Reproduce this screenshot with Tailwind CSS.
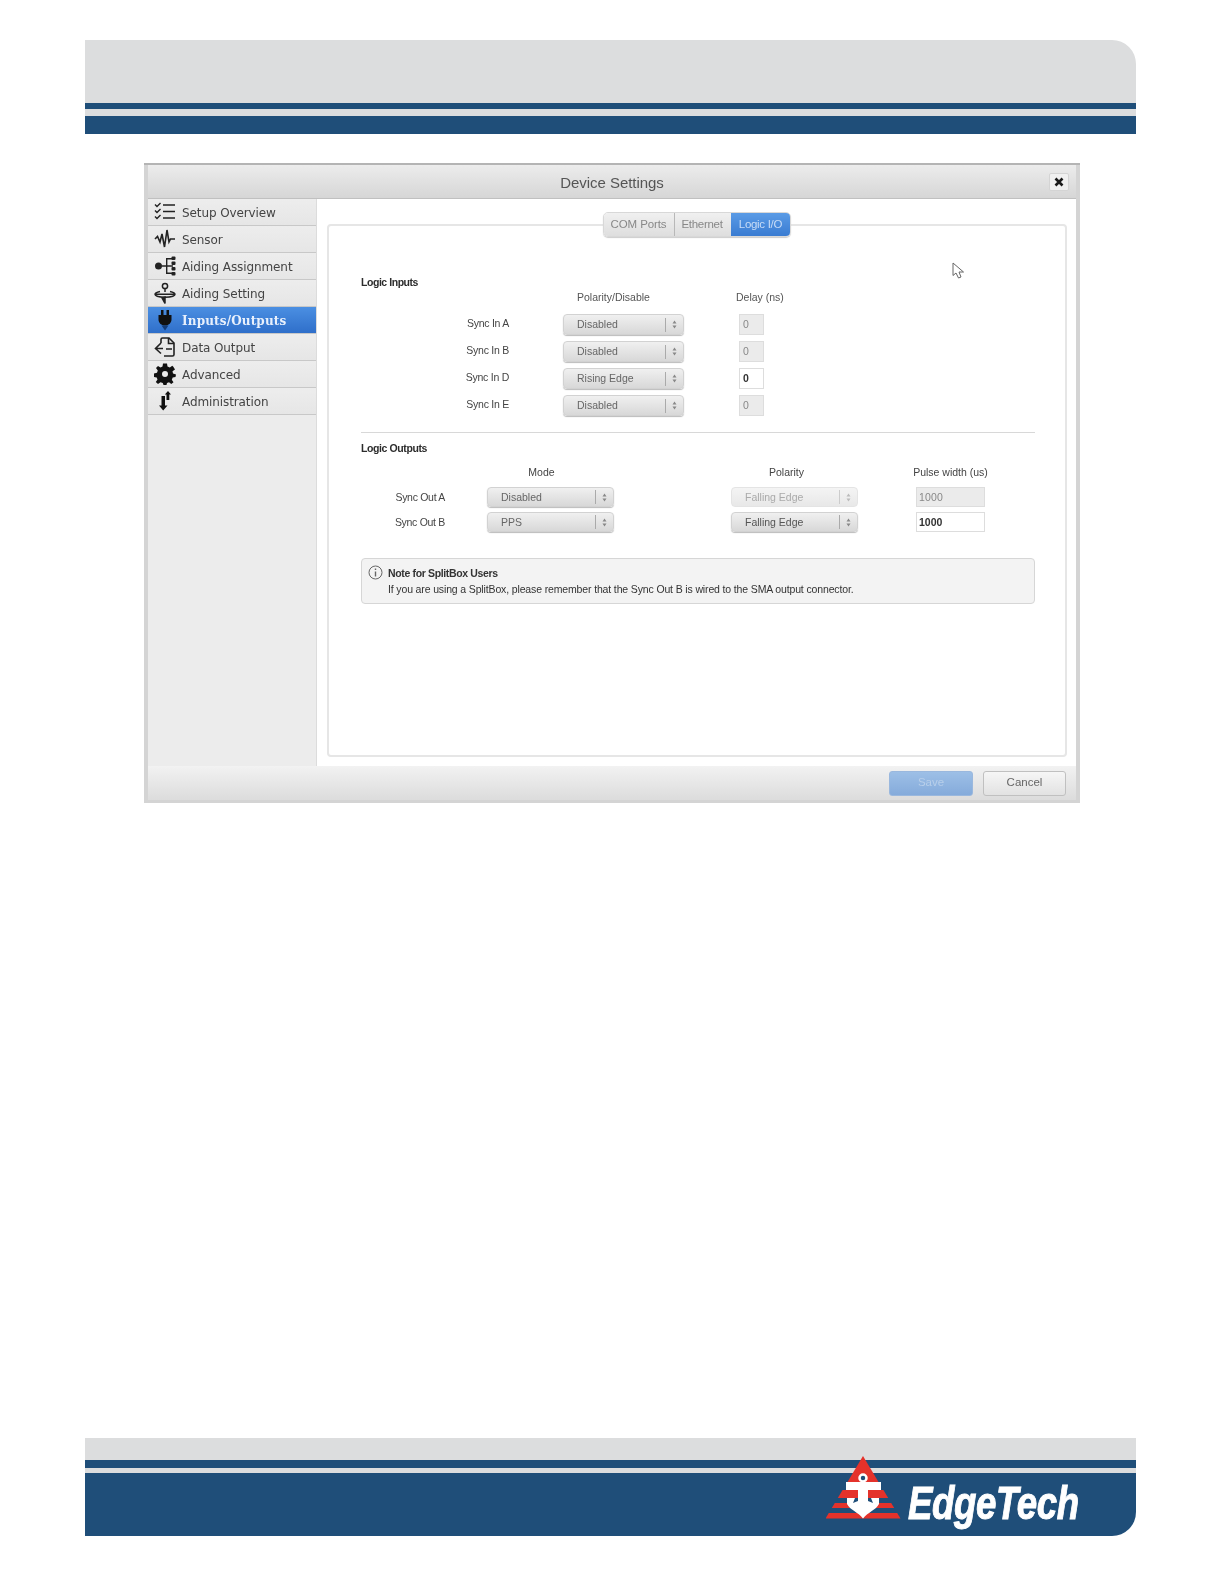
<!DOCTYPE html>
<html>
<head>
<meta charset="utf-8">
<script src="https://cdn.jsdelivr.net/npm/@tailwindcss/browser@4"></script>
<title>Device Settings</title>
</head>
<body class="bg-white w-[1224px] h-[1584px] overflow-hidden relative font-['Liberation_Sans',Arial,sans-serif]">

<header class="pt-[40px] pl-[85px] pr-[88px]">
  <div class="h-[63px] bg-[#dcddde] rounded-tr-[24px]"></div>
  <div class="h-[6px] bg-[#1f4e79]"></div>
  <div class="h-[7px] bg-[#dcddde]"></div>
  <div class="h-[18px] bg-[#1f4e79]"></div>
</header>

<main class="mt-[29px] ml-[144px] w-[936px] h-[640px] bg-[#d4d4d4] border-t-[2px] border-[#b4b4b4] px-[4px] flex flex-col blur-[0.5px] relative">
  <div class="h-[34px] shrink-0 bg-gradient-to-b from-[#ececec] to-[#d6d6d6] border-b border-[#c0c0c0] flex items-center justify-center relative">
    <span class="text-[15px] text-[#555] pt-[3px] tracking-[-0.05px]">Device Settings</span>
    <button class="absolute right-[7px] top-[8px] w-[20px] h-[18px] bg-[#f0f0f0] border border-[#d4d4d4] rounded-[2px] flex items-center justify-center">
      <svg width="10" height="10" viewBox="0 0 10 10"><path d="M1.500 1.500 8.500 8.500M8.500 1.500 1.500 8.500" stroke="#1a1a1a" stroke-width="2.600"/></svg>
    </button>
  </div>

  <div class="flex h-[567px] shrink-0">
    <nav class="w-[169px] shrink-0 bg-[#ececec] border-r border-[#dcdcdc] font-['DejaVu_Sans',Verdana,sans-serif] text-[12px] text-[#444]">
      <a class="h-[27px] flex items-center border-b border-[#c8c8c8] bg-gradient-to-b from-[#ededed] to-[#e6e6e6]">
        <svg class="ml-[6px] w-[22px] h-[22px] shrink-0" viewBox="0 0 22 22" fill="none" stroke="#222"><path d="M1 3.500 3 5.500 6.500 2M1 9.500 3 11.500 6.500 8M1 15.500 3 17.500 6.500 14" stroke-width="1.400"/><path d="M9 4H21M9 10.500H21M9 17H21" stroke-width="1.500"/></svg>
        <span class="ml-[6px] tracking-[-0.1px] pt-[1px]">Setup Overview</span>
      </a>
      <a class="h-[27px] flex items-center border-b border-[#c8c8c8] bg-gradient-to-b from-[#ededed] to-[#e6e6e6]">
        <svg class="ml-[6px] w-[22px] h-[22px] shrink-0" viewBox="0 0 22 22" fill="none" stroke="#222" stroke-width="1.600"><path d="M1 11 3.500 8.500 6 14 8 6 10.500 19 13 2 15 14 16.500 11H21"/></svg>
        <span class="ml-[6px] tracking-[-0.1px] pt-[1px]">Sensor</span>
      </a>
      <a class="h-[27px] flex items-center border-b border-[#c8c8c8] bg-gradient-to-b from-[#ededed] to-[#e6e6e6]">
        <svg class="ml-[6px] w-[22px] h-[22px] shrink-0" viewBox="0 0 22 22" fill="#222" stroke="none"><circle cx="4.500" cy="11" r="3.500"/><path d="M8 10.300h4V3h7v1.400h-5.600v5.900H19v1.400h-5.600v5.900H19V19h-7v-7.300H8z"/><rect x="17.500" y="1.500" width="4" height="3.600" rx="1"/><rect x="17.500" y="6.500" width="4" height="3.400" rx="1"/><rect x="17.500" y="12" width="4" height="3.400" rx="1"/><rect x="17.500" y="17" width="4" height="3.600" rx="1"/></svg>
        <span class="ml-[6px] tracking-[-0.1px] pt-[1px]">Aiding Assignment</span>
      </a>
      <a class="h-[27px] flex items-center border-b border-[#c8c8c8] bg-gradient-to-b from-[#ededed] to-[#e6e6e6]">
        <svg class="ml-[6px] w-[22px] h-[22px] shrink-0" viewBox="0 0 22 22" fill="none" stroke="#222" stroke-width="1.500"><circle cx="11" cy="4" r="2.600"/><path d="M11 6.600V10M6 9.500C2.500 10.200 1 11.200 1 12.300 1 14 5.500 15.200 11 15.200S21 14 21 12.300C21 11.200 19.500 10.200 16 9.500M1 12.300H21"/><path d="M8 16 11 21.500 11 15Z" fill="#222"/></svg>
        <span class="ml-[6px] tracking-[-0.1px] pt-[1px]">Aiding Setting</span>
      </a>
      <a class="h-[27px] flex items-center border-b border-[#c8c8c8] bg-gradient-to-b from-[#4b8fe2] to-[#2f6fca] font-['DejaVu_Serif',serif] font-bold">
        <svg class="ml-[6px] w-[22px] h-[22px] shrink-0" viewBox="0 0 22 22"><path d="M7 1h2.500v5H12.500V1H15v5h2.500v4.500C17.500 14 14.500 16 12.500 16.500H9.500C7.500 16 4.500 14 4.500 10.500V6H7z" fill="#111"/><path d="M7.500 16.500H14.500L11 21.500Z" fill="#143c78"/></svg>
        <span class="ml-[6px] tracking-[0.15px] text-[#e8f0fc] pt-[1px]">Inputs/Outputs</span>
      </a>
      <a class="h-[27px] flex items-center border-b border-[#c8c8c8] bg-gradient-to-b from-[#ededed] to-[#e6e6e6]">
        <svg class="ml-[6px] w-[22px] h-[22px] shrink-0" viewBox="0 0 22 22" fill="none" stroke="#222" stroke-width="1.600"><path d="M7 7V3.500C7 2.500 7.500 2 8.500 2H15L20 7V18.500C20 19.500 19.500 20 18.500 20H10"/><path d="M7 7 1.500 12.500 7 17.500M2 12.500H9M12 13H18"/><path d="M14.500 2V7.500H20"/></svg>
        <span class="ml-[6px] tracking-[-0.1px] pt-[1px]">Data Output</span>
      </a>
      <a class="h-[27px] flex items-center border-b border-[#c8c8c8] bg-gradient-to-b from-[#ededed] to-[#e6e6e6]">
        <svg class="ml-[6px] w-[22px] h-[22px] shrink-0" viewBox="0 0 22 22"><path fill="#111" fill-rule="evenodd" d="M9 0.500H13L13.500 3.500 15.800 4.500 18.300 2.700 19.300 3.700 21 6.500 18.500 8.200 19 10.500 22 11.500 21.500 14 18.700 14.500 17.800 16.800 19.500 19.300 17.300 21 15 19.300 13 20 12.500 22H9.500L8.800 20 6.500 19.200 4 21 1.800 19 3.500 16.500 2.700 14.500 0 14V10.500L3 9.800 3.800 7.500 2 5 4 3 6.500 4.500 8.500 3.500ZM11 8A3 3 0 1 0 11 14 3 3 0 1 0 11 8Z"/></svg>
        <span class="ml-[6px] tracking-[-0.1px] pt-[1px]">Advanced</span>
      </a>
      <a class="h-[27px] flex items-center border-b border-[#c8c8c8] bg-gradient-to-b from-[#ededed] to-[#e6e6e6]">
        <svg class="ml-[6px] w-[22px] h-[22px] shrink-0" viewBox="0 0 22 22" fill="#111"><path d="M7.500 6H11V15.500H13.500L9.200 20.500 5 15.500H7.500Z"/><path d="M12.500 10V4.500H10.800L14 1 17 4.500H15.300V10Z"/></svg>
        <span class="ml-[6px] tracking-[-0.1px] pt-[1px]">Administration</span>
      </a>
    </nav>

    <section class="flex-1 bg-white pt-[25px] pl-[10px] pr-[9px] pb-[9px] relative">
      <div class="h-[533px] border-2 border-[#e6e6e6] rounded-[4px] pl-[32px] pr-[30px] text-[#333] text-[10.5px]">
        <h2 class="mt-[49px] h-[14px] leading-[14px] text-[10.5px] font-bold text-[#2c2c2c] tracking-[-0.45px]">Logic Inputs</h2>

        <div class="mt-[1px] grid grid-cols-[148px_121px_26px] gap-x-[54px] h-[14px] leading-[14px] text-[#555]">
          <span></span><span class="pl-[14px] whitespace-nowrap">Polarity/Disable</span><span class="whitespace-nowrap -ml-[2px]">Delay (ns)</span>
        </div>

        <div class="mt-[10px] grid grid-cols-[148px_121px_26px] gap-x-[54px] gap-y-[6px] auto-rows-[21px] items-center">
          <span class="text-right pb-[2px] tracking-[-0.25px] text-[#444]">Sync In A</span>
          <div class="h-[21px] flex items-center rounded-[4px] border border-[#d2d2d2] bg-gradient-to-b from-[#f0f0f0] to-[#d8d8d8] text-[#666] shadow-[0_1px_1px_#bbb]"><span class="pl-[13px] pt-[1px] flex-1">Disabled</span><i class="w-px h-[14px] bg-[#aaa]"></i><svg class="w-[17px] h-[11px]" viewBox="0 0 17 11"><path d="M6.500 4.500 8.500 1.500 10.500 4.500ZM6.500 6.500 8.500 9.500 10.500 6.500Z" fill="#888"/></svg></div>
          <div class="ml-[1px] h-[21px] bg-[#ebebeb] border border-[#ddd] text-[#888] pl-[3px] leading-[19px]">0</div>

          <span class="text-right pb-[2px] tracking-[-0.25px] text-[#444]">Sync In B</span>
          <div class="h-[21px] flex items-center rounded-[4px] border border-[#d2d2d2] bg-gradient-to-b from-[#f0f0f0] to-[#d8d8d8] text-[#666] shadow-[0_1px_1px_#bbb]"><span class="pl-[13px] pt-[1px] flex-1">Disabled</span><i class="w-px h-[14px] bg-[#aaa]"></i><svg class="w-[17px] h-[11px]" viewBox="0 0 17 11"><path d="M6.500 4.500 8.500 1.500 10.500 4.500ZM6.500 6.500 8.500 9.500 10.500 6.500Z" fill="#888"/></svg></div>
          <div class="ml-[1px] h-[21px] bg-[#ebebeb] border border-[#ddd] text-[#888] pl-[3px] leading-[19px]">0</div>

          <span class="text-right pb-[2px] tracking-[-0.25px] text-[#444]">Sync In D</span>
          <div class="h-[21px] flex items-center rounded-[4px] border border-[#d2d2d2] bg-gradient-to-b from-[#f0f0f0] to-[#d8d8d8] text-[#666] shadow-[0_1px_1px_#bbb]"><span class="pl-[13px] pt-[1px] flex-1">Rising Edge</span><i class="w-px h-[14px] bg-[#aaa]"></i><svg class="w-[17px] h-[11px]" viewBox="0 0 17 11"><path d="M6.500 4.500 8.500 1.500 10.500 4.500ZM6.500 6.500 8.500 9.500 10.500 6.500Z" fill="#888"/></svg></div>
          <div class="ml-[1px] h-[21px] bg-white border border-[#ddd] text-[#333] pl-[3px] leading-[19px] font-bold">0</div>

          <span class="text-right pb-[2px] tracking-[-0.25px] text-[#444]">Sync In E</span>
          <div class="h-[21px] flex items-center rounded-[4px] border border-[#d2d2d2] bg-gradient-to-b from-[#f0f0f0] to-[#d8d8d8] text-[#666] shadow-[0_1px_1px_#bbb]"><span class="pl-[13px] pt-[1px] flex-1">Disabled</span><i class="w-px h-[14px] bg-[#aaa]"></i><svg class="w-[17px] h-[11px]" viewBox="0 0 17 11"><path d="M6.500 4.500 8.500 1.500 10.500 4.500ZM6.500 6.500 8.500 9.500 10.500 6.500Z" fill="#888"/></svg></div>
          <div class="ml-[1px] h-[21px] bg-[#ebebeb] border border-[#ddd] text-[#888] pl-[3px] leading-[19px]">0</div>
        </div>

        <hr class="mt-[16px] border-t border-[#d8d8d8]">

        <h2 class="mt-[8px] h-[14px] leading-[14px] text-[10.5px] font-bold text-[#2c2c2c] tracking-[-0.4px]">Logic Outputs</h2>

        <div class="mt-[10px] grid grid-cols-[84px_42px_127px_117px_127px_58px_69px] h-[14px] leading-[14px] text-[#444]">
          <span></span><span></span>
          <span class="text-center pr-[18px]">Mode</span><span></span>
          <span class="text-center pr-[16px]">Polarity</span><span></span>
          <span class="flex justify-center whitespace-nowrap">Pulse width (us)</span>
        </div>

        <div class="mt-[8px] grid grid-cols-[84px_42px_127px_117px_127px_58px_69px] gap-y-[5px] auto-rows-[20px] items-center">
          <span class="text-right pt-[1px] tracking-[-0.3px] text-[#444]">Sync Out A</span><span></span>
          <div class="h-[20px] flex items-center rounded-[4px] border border-[#d2d2d2] bg-gradient-to-b from-[#f0f0f0] to-[#d8d8d8] text-[#666] shadow-[0_1px_1px_#bbb]"><span class="pl-[13px] pt-[1px] flex-1">Disabled</span><i class="w-px h-[14px] bg-[#aaa]"></i><svg class="w-[17px] h-[11px]" viewBox="0 0 17 11"><path d="M6.500 4.500 8.500 1.500 10.500 4.500ZM6.500 6.500 8.500 9.500 10.500 6.500Z" fill="#888"/></svg></div><span></span>
          <div class="h-[20px] flex items-center rounded-[4px] border border-[#e4e4e4] bg-gradient-to-b from-[#f4f4f4] to-[#e8e8e8] text-[#aaa]"><span class="pl-[13px] pt-[1px] flex-1">Falling Edge</span><i class="w-px h-[14px] bg-[#ccc]"></i><svg class="w-[17px] h-[11px]" viewBox="0 0 17 11"><path d="M6.500 4.500 8.500 1.500 10.500 4.500ZM6.500 6.500 8.500 9.500 10.500 6.500Z" fill="#bbb"/></svg></div><span></span>
          <div class="h-[20px] bg-[#ebebeb] border border-[#ddd] text-[#888] pl-[2px] leading-[18px] tracking-[0.2px]">1000</div>

          <span class="text-right pt-[1px] tracking-[-0.3px] text-[#444]">Sync Out B</span><span></span>
          <div class="h-[20px] flex items-center rounded-[4px] border border-[#d2d2d2] bg-gradient-to-b from-[#f0f0f0] to-[#d8d8d8] text-[#666] shadow-[0_1px_1px_#bbb]"><span class="pl-[13px] pt-[1px] flex-1">PPS</span><i class="w-px h-[14px] bg-[#aaa]"></i><svg class="w-[17px] h-[11px]" viewBox="0 0 17 11"><path d="M6.500 4.500 8.500 1.500 10.500 4.500ZM6.500 6.500 8.500 9.500 10.500 6.500Z" fill="#888"/></svg></div><span></span>
          <div class="h-[20px] flex items-center rounded-[4px] border border-[#d2d2d2] bg-gradient-to-b from-[#f0f0f0] to-[#d8d8d8] text-[#555] shadow-[0_1px_1px_#bbb]"><span class="pl-[13px] pt-[1px] flex-1">Falling Edge</span><i class="w-px h-[14px] bg-[#aaa]"></i><svg class="w-[17px] h-[11px]" viewBox="0 0 17 11"><path d="M6.500 4.500 8.500 1.500 10.500 4.500ZM6.500 6.500 8.500 9.500 10.500 6.500Z" fill="#888"/></svg></div><span></span>
          <div class="h-[20px] bg-white border border-[#ddd] text-[#333] pl-[2px] leading-[18px] font-bold">1000</div>
        </div>

        <div class="mt-[26px] h-[46px] bg-[#f3f3f3] border border-[#d6d6d6] rounded-[4px] flex">
          <svg class="ml-[6px] mt-[6px] w-[15px] h-[15px] shrink-0" viewBox="0 0 15 15" fill="none" stroke="#666"><circle cx="7.500" cy="7.500" r="6.500"/><path d="M7.500 6.500V11.500" stroke-width="1.400"/><path d="M7.500 3.500V5" stroke-width="1.400"/></svg>
          <div class="ml-[5px] pt-[6px] leading-[16px]">
            <div class="font-bold text-[#333] text-[10.5px] tracking-[-0.35px] whitespace-nowrap">Note for SplitBox Users</div>
            <div class="text-[#333] text-[10.5px] tracking-[-0.14px] whitespace-nowrap">If you are using a SplitBox, please remember that the Sync Out B is wired to the SMA output connector.</div>
          </div>
        </div>
      </div>

      <div class="absolute left-[286px] top-[13px] w-[188px] h-[25px] rounded-[5px] flex text-[11.5px] overflow-hidden border border-[#d8d8d8] shadow-[0_1px_1px_#ccc]">
        <span class="w-[71px] bg-gradient-to-b from-[#f0f0f0] to-[#dedede] border-r border-[#b8b8b8] flex items-center justify-center text-[#888] tracking-[-0.1px] pr-[1px]">COM Ports</span>
        <span class="w-[56px] bg-gradient-to-b from-[#f0f0f0] to-[#dedede] flex items-center justify-center text-[#888] tracking-[-0.3px] pr-[2px]">Ethernet</span>
        <span class="flex-1 bg-gradient-to-b from-[#5a9be6] to-[#3a7cd2] flex items-center justify-center text-[#c8dcf6] tracking-[-0.3px]">Logic I/O</span>
      </div>

      <svg class="absolute left-[635px] top-[63px] w-[14px] h-[18px]" viewBox="0 0 14 18"><path d="M1 1V13.500L4 11 6.500 16 9 15 7 10 11.500 10Z" fill="#fff" stroke="#666"/></svg>
    </section>
  </div>

  <div class="h-[34px] shrink-0 bg-gradient-to-b from-[#f2f2f2] to-[#dcdcdc] flex items-center justify-end pr-[10px] gap-[10px]">
    <button class="w-[84px] h-[25px] rounded-[3px] bg-gradient-to-b from-[#9dbfe6] to-[#85abdb] border border-[#9ab8de] text-[11.5px] text-[#b8cfea]">Save</button>
    <button class="w-[83px] h-[25px] rounded-[3px] bg-gradient-to-b from-[#f6f6f6] to-[#e2e2e2] border border-[#c0c0c0] text-[11.5px] text-[#666]">Cancel</button>
  </div>
</main>

<footer class="mt-[635px] pl-[85px] pr-[88px] relative">
  <div class="h-[22px] bg-[#dcddde]"></div>
  <div class="h-[8px] bg-[#1f4e79]"></div>
  <div class="h-[5px] bg-[#dcddde]"></div>
  <div class="h-[63px] bg-[#1f4e79] rounded-br-[24px]"></div>

  <svg class="absolute left-[826px] top-[18px] w-[75px] h-[64px]" viewBox="0 0 75 64">
    <path d="M37 0 52.500 26H21.500Z" fill="#e4322b"/>
    <path d="M16.600 34H57.400L62.200 42H11.800Z" fill="#e4322b"/>
    <path d="M8.800 47H65.200L68.200 52H5.800Z" fill="#e4322b"/>
    <path d="M2.800 57H71.200L74.500 62.500H-0.500Z" fill="#e4322b"/>
    <path d="M20 26H55V34H42V45L47 47 45 42H53V48C50 54 42 56 37 62.500 32 56 24 54 21 48V42H29L27 47 32 45V34H20Z" fill="#fff"/>
    <circle cx="37" cy="22" r="3.500" fill="#1f4e79" stroke="#fff" stroke-width="2.500"/>
  </svg>
  <span class="absolute left-[908px] top-[38px] text-[47px] leading-[54px] font-bold italic text-white origin-left [transform:scaleX(0.78)] whitespace-nowrap tracking-[-0.5px] [-webkit-text-stroke:1px_white]">EdgeTech</span>
</footer>
</body>
</html>
